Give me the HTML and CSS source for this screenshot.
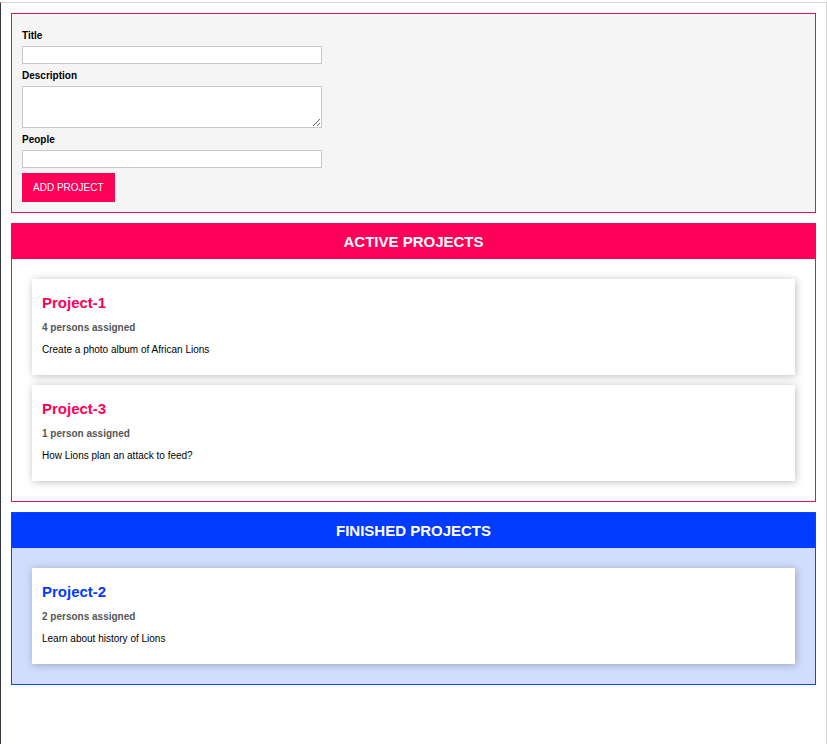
FILE: index.html
```html
<!DOCTYPE html>
<html lang="en">
<head>
<meta charset="utf-8">
<title>Project Manager</title>
<link rel="stylesheet" href="styles.css">
</head>
<body>
<div class="frame">
  <form class="user-input">
    <div class="form-control">
      <label for="title">Title</label>
      <input type="text" id="title" class="field">
    </div>
    <div class="form-control">
      <label for="description">Description</label>
      <textarea id="description" class="field area"></textarea>
    </div>
    <div class="form-control">
      <label for="people">People</label>
      <input type="text" id="people" class="field">
    </div>
    <button type="button" class="submit">ADD PROJECT</button>
  </form>

  <section class="projects">
    <header class="projects-header"><h2 class="projects-title">ACTIVE PROJECTS</h2></header>
    <ul class="project-list">
      <li class="project">
        <h2 class="project-name">Project-1</h2>
        <h3 class="project-people">4 persons assigned</h3>
        <p class="project-desc">Create a photo album of African Lions</p>
      </li>
      <li class="project">
        <h2 class="project-name">Project-3</h2>
        <h3 class="project-people">1 person assigned</h3>
        <p class="project-desc">How Lions plan an attack to feed?</p>
      </li>
    </ul>
  </section>

  <section class="projects finished">
    <header class="projects-header"><h2 class="projects-title">FINISHED PROJECTS</h2></header>
    <ul class="project-list">
      <li class="project">
        <h2 class="project-name">Project-2</h2>
        <h3 class="project-people">2 persons assigned</h3>
        <p class="project-desc">Learn about history of Lions</p>
      </li>
    </ul>
  </section>
</div>
</body>
</html>
```

FILE: styles.css
```css
* { box-sizing: border-box; }

html {
  font-family: "Liberation Sans", Arial, sans-serif;
  font-size: 10px;
  background: #ffffff;
}

body {
  margin: 0;
  color: #000;
}

.frame {
  margin-top: 2px;
  border-top: 1px solid #d4d4d4;
  border-right: 1px solid #d4d4d4;
  border-left: 1px solid #333843;
  min-height: 742px;
  overflow: hidden;
}

.user-input {
  margin: 10px;
  padding: 10px;
  border: 1px solid #e3115c;
  background: #f5f5f5;
}

.form-control label {
  display: block;
  font-weight: bold;
  font-size: 10px;
  line-height: 11px;
  padding-top: 1px;
  margin: 5px 0;
}

.field {
  display: block;
  margin: 5px 0;
  width: 100%;
  max-width: 300px;
  height: 18px;
  padding: 2px 4px;
  border: 1px solid #c8c8c8;
  background: #fff;
  font: inherit;
  border-radius: 0;
}

.area {
  height: 42px;
  resize: vertical;
}

.submit {
  display: block;
  font: inherit;
  font-size: 10px;
  line-height: 12px;
  background: #ff0058;
  border: 1px solid #ff0058;
  color: #fff;
  padding: 8px 10px 7px;
  height: 29px;
  margin: 0;
}

.projects {
  margin: 10px;
  border: 1px solid #e3115c;
}

.projects-header {
  background: #ff0058;
  height: 35px;
  display: flex;
  justify-content: center;
  align-items: center;
}

.projects-title {
  margin: 0;
  color: #fff;
  font-size: 15px;
  font-weight: bold;
}

.finished {
  border-color: #0a45ff;
  background: #d1ddfd;
}

.finished .projects-header {
  background: #003cff;
}

.project-list {
  list-style: none;
  margin: 0;
  padding: 10px;
}

.project {
  background: #fff;
  box-shadow: 1px 1px 8px rgba(0, 0, 0, 0.26);
  padding: 10px;
  margin: 10px;
}

.project-name {
  color: #ff0058;
  font-size: 15px;
  line-height: 18px;
  margin: 5px 0;
}

.finished .project-name {
  color: #003cff;
}

.project-people {
  color: #575757;
  font-size: 10px;
  line-height: 12px;
  margin: 10px 0;
}

.project-desc {
  font-size: 10px;
  line-height: 12px;
  margin: 10px 0 9px;
}
```
